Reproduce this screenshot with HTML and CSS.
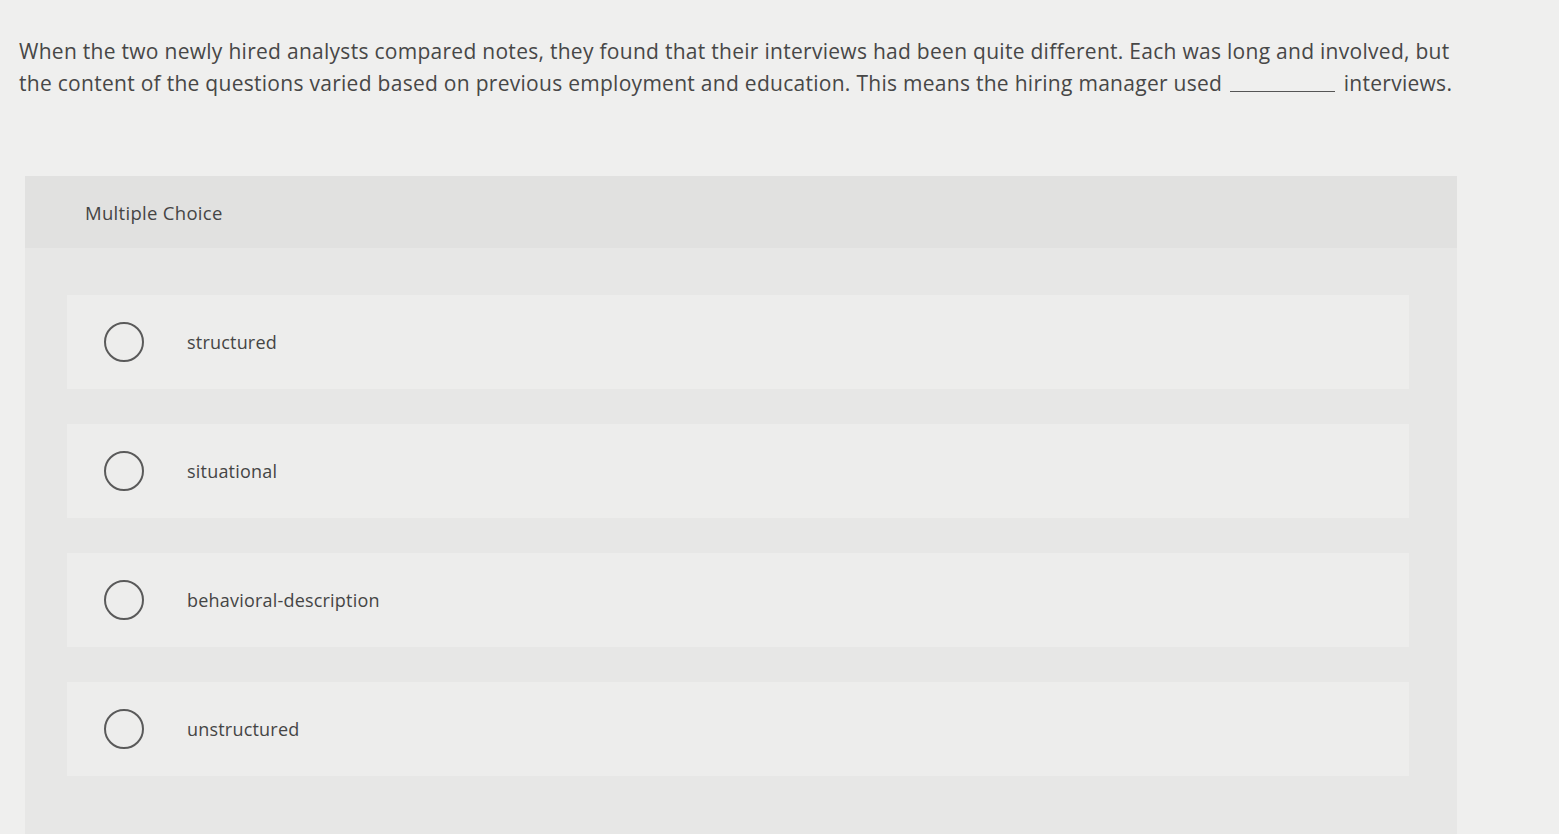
FILE: index.html
```html
<!DOCTYPE html>
<html lang="en">
<head>
<meta charset="utf-8">
<title>Multiple Choice</title>
<link rel="stylesheet" href="styles.css">
</head>
<body>
<div class="page">
  <p class="question">When the two newly hired analysts compared notes, they found that their interviews had been quite different. Each was long and involved, but the content of the questions varied based on previous employment and education. This means the hiring manager used <span class="blank"></span> interviews.</p>
  <section class="panel">
    <header class="panel-head">Multiple Choice</header>
    <div class="options">
      <label class="option"><span class="radio"></span><span class="label">structured</span></label>
      <label class="option"><span class="radio"></span><span class="label">situational</span></label>
      <label class="option"><span class="radio"></span><span class="label">behavioral-description</span></label>
      <label class="option"><span class="radio"></span><span class="label">unstructured</span></label>
    </div>
  </section>
</div>
</body>
</html>
```
FILE: styles.css
```css
html, body {
  margin: 0;
  padding: 0;
  background: #efefee;
  height: 100%;
  overflow: hidden;
}
.page {
  padding: 35px 0 0 19px;
  font-family: "Open Sans", "Liberation Sans", sans-serif;
  color: #474747;
}
.question {
  margin: 0;
  width: 1452px;
  font-size: 21px;
  line-height: 32px;
  letter-spacing: 0.28px;
}
.blank {
  display: inline-block;
  width: 105px;
  height: 1px;
  background: #555;
  margin: 0 3px 0 2px;
  vertical-align: -1px;
}
.panel {
  margin: 77px 0 0 6px;
  width: 1432px;
  background: #e7e7e6;
  min-height: 700px;
}
.panel-head {
  background: #e1e1e0;
  height: 72px;
  padding-left: 60px;
  display: flex;
  align-items: center;
  font-size: 18.5px;
  letter-spacing: 0.3px;
  color: #454545;
}
.options {
  display: flex;
  flex-direction: column;
  gap: 35px;
  padding: 47px 48px 0 42px;
}
.option {
  display: flex;
  align-items: center;
  height: 94px;
  background: #ededec;
  padding-left: 37px;
}
.radio {
  width: 36px;
  height: 36px;
  border: 2px solid #5a5a5a;
  border-radius: 50%;
  flex: none;
}
.label {
  margin-left: 43px;
  font-size: 18px;
  letter-spacing: 0.2px;
  color: #454545;
}
```
